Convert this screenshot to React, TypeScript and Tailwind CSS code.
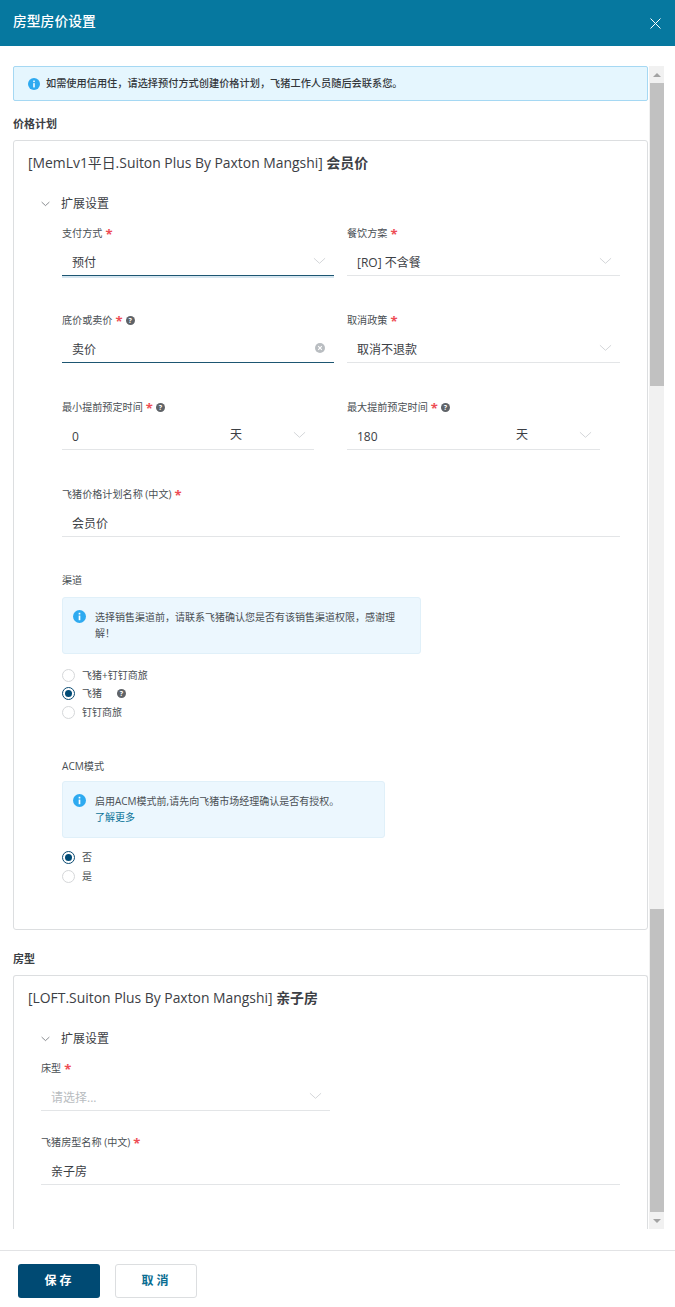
import type { ReactNode } from 'react'

const FONT = "font-['Open_Sans','Noto_Sans_CJK_SC',sans-serif]"

function Chevron({ className = 'text-[#d0d3d6]' }: { className?: string }) {
  return (
    <svg width="13" height="8" viewBox="0 0 14 8" fill="none" className={className}>
      <path d="M1 1l6 5.5L13 1" stroke="currentColor" strokeWidth="1" />
    </svg>
  )
}

function InfoIcon({ size = 13 }: { size?: number }) {
  return (
    <svg width={size} height={size} viewBox="0 0 14 14" className="shrink-0">
      <circle cx="7" cy="7" r="7" fill="#2eaaf0" />
      <rect x="6.1" y="6" width="1.8" height="5" fill="#fff" />
      <rect x="6.1" y="3" width="1.8" height="1.8" fill="#fff" />
    </svg>
  )
}

function HelpIcon() {
  return (
    <span className="w-[9px] h-[9px] rounded-full bg-[#5f6368] text-white text-[7px] leading-[9px] font-bold text-center inline-block shrink-0">
      ?
    </span>
  )
}

function ClearIcon() {
  return (
    <svg width="10" height="10" viewBox="0 0 10 10">
      <circle cx="5" cy="5" r="5" fill="#b9bdc1" />
      <path d="M3.2 3.2l3.6 3.6M6.8 3.2L3.2 6.8" stroke="#fff" strokeWidth="1.1" />
    </svg>
  )
}

function Label({ text, required, help }: { text: string; required?: boolean; help?: boolean }) {
  return (
    <div className="h-4 flex items-center gap-[3px] text-[10.1px] leading-4 text-[#4a4f54]">
      <span>{text}</span>
      {required && <span className="text-[13px] leading-4 font-bold text-[#ee4d55] mt-[2px]">*</span>}
      {help && <HelpIcon />}
    </div>
  )
}

interface FieldProps {
  label: string
  value: string
  required?: boolean
  help?: boolean
  focused?: boolean
  glow?: boolean
  placeholder?: boolean
  unit?: string
  trailing?: ReactNode
  className?: string
}

function Field({ label, value, required = true, help, focused, glow, placeholder, unit, trailing, className = '' }: FieldProps) {
  const line = focused ? 'border-[#1d5672]' : 'border-[#e3e5e7]'
  return (
    <div className={className}>
      <Label text={label} required={required} help={help} />
      <div className={`h-[35px] pl-[10px] border-b ${line} flex items-center text-[12px] ${placeholder ? 'text-[#b8bcc0]' : 'text-[#3c4045]'} ${glow ? 'shadow-[0_2px_0_#d6e6f0]' : ''}`}>
        <span className="flex-1 mt-[9px]">{value}</span>
        {unit && <span className="mt-[6px] mr-[51px] text-[#3c4045]">{unit}</span>}
        <span className="mr-[8px] mt-[5px] flex items-center">{trailing ?? <Chevron />}</span>
      </div>
    </div>
  )
}

function Radio({ label, checked, help }: { label: string; checked?: boolean; help?: boolean }) {
  return (
    <div className="h-[18.5px] flex items-center text-[10px] text-[#4a4f54]">
      <span className={`w-[13px] h-[13px] rounded-full bg-white flex items-center justify-center mr-[7px] border ${checked ? 'border-[#0a4a72]' : 'border-[#d5d7d9]'}`}>
        {checked && <span className="w-[7px] h-[7px] rounded-full bg-[#004b76]" />}
      </span>
      <span>{label}</span>
      {help && <span className="ml-[15px] flex"><HelpIcon /></span>}
    </div>
  )
}

function Expand() {
  return (
    <div className="h-4 flex items-center gap-[11px] pl-[27px] text-[12px] text-[#3c4045]">
      <Chevron className="text-[#4a4f54] w-[9px] h-[6px]" />
      <span>扩展设置</span>
    </div>
  )
}

function Notice({ children, className }: { children: ReactNode; className: string }) {
  return (
    <div className={`${className} ml-[48px] rounded-[3px] border border-[#e0f0f9] bg-[#ecf7fe] pl-[10px] pr-3 pt-[11px] flex gap-[9px] text-[10px] leading-[16px] text-[#4a4f54]`}>
      <span className="mt-[1px]"><InfoIcon /></span>
      <div>{children}</div>
    </div>
  )
}

export default function App() {
  return (
    <div className={`${FONT} w-[675px] h-[1307px] bg-white flex flex-col overflow-hidden`}>
      {/* Header */}
      <div className="h-[46px] bg-[#06789f] flex items-center justify-between pl-[13px] pr-[14px] text-white">
        <span className="text-[13.8px] font-medium mb-[3px]">房型房价设置</span>
        <svg width="11" height="11" viewBox="0 0 11 11" fill="none">
          <path d="M.5.5l10 10M10.5.5l-10 10" stroke="#fff" strokeWidth="1" />
        </svg>
      </div>

      {/* Body */}
      <div className="h-[1183px] pt-5 pl-[13px] flex overflow-hidden">
        <div className="w-[635px] shrink-0 flex flex-col">
          <div className="h-[35px] shrink-0 rounded-[2px] border border-[#a5d8f3] bg-[#e5f6fe] flex items-center gap-[6px] pl-[14px] text-[10.2px] font-medium text-[#33373b]">
            <InfoIcon size={12} />
            <span>如需使用信用住，请选择预付方式创建价格计划，飞猪工作人员随后会联系您。</span>
          </div>

          <div className="h-[39px] shrink-0 flex items-end pb-[8px] text-[11px] font-semibold text-[#3c4045]">价格计划</div>

          <div className="h-[790px] shrink-0 rounded-[3px] border border-[#dcdee0] bg-white">
            <div className="h-[46px] pl-[14px] pt-[12px] text-[13.9px] leading-5 text-[#3c4045]">
              [MemLv1平日.Suiton Plus By Paxton Mangshi] <span className="font-semibold">会员价</span>
            </div>
            <div className="mt-[9px]"><Expand /></div>
            <div className="mt-[13px] ml-[48px] mr-[27px] grid grid-cols-[272px_273px] gap-x-[13px] gap-y-[36px]">
              <Field label="支付方式" value="预付" focused glow />
              <Field label="餐饮方案" value="[RO] 不含餐" />
              <Field label="底价或卖价" value="卖价" help focused trailing={<span className="mr-[1px]"><ClearIcon /></span>} />
              <Field label="取消政策" value="取消不退款" />
              <Field label="最小提前预定时间" value="0" help unit="天" className="w-[252px]" />
              <Field label="最大提前预定时间" value="180" help unit="天" className="w-[253px]" />
              <Field label="飞猪价格计划名称 (中文)" value="会员价" trailing={<span />} className="col-span-2" />
            </div>

            <div className="mt-[35px] ml-[48px]"><Label text="渠道" /></div>
            <div className="mt-[9px]">
              <Notice className="w-[359px] h-[57px]">选择销售渠道前，请联系飞猪确认您是否有该销售渠道权限，感谢理解！</Notice>
            </div>
            <div className="mt-[12px] ml-[48px]">
              <Radio label="飞猪+钉钉商旅" />
              <Radio label="飞猪" checked help />
              <Radio label="钉钉商旅" />
            </div>

            <div className="mt-[36px] ml-[48px]"><Label text="ACM模式" /></div>
            <div className="mt-[7px]">
              <Notice className="w-[323px] h-[57px]">
                启用ACM模式前,请先向飞猪市场经理确认是否有授权。
                <div className="text-[#0b7398]">了解更多</div>
              </Notice>
            </div>
            <div className="mt-[11px] ml-[48px]">
              <Radio label="否" checked />
              <Radio label="是" />
            </div>
          </div>

          <div className="h-[45px] shrink-0 flex items-end pb-[8px] text-[11px] font-semibold text-[#3c4045]">房型</div>

          <div className="flex-1 rounded-t-[3px] border border-b-0 border-[#dcdee0] bg-white">
            <div className="h-[46px] pl-[14px] pt-[12px] text-[13.9px] leading-5 text-[#3c4045]">
              [LOFT.Suiton Plus By Paxton Mangshi] <span className="font-semibold">亲子房</span>
            </div>
            <div className="mt-[9px]"><Expand /></div>
            <div className="mt-[13px] ml-[27px] mr-[27px] flex flex-col gap-[23px]">
              <Field label="床型" value="请选择..." placeholder className="w-[289px]" />
              <Field label="飞猪房型名称 (中文)" value="亲子房" trailing={<span />} />
            </div>
          </div>
        </div>

        {/* Scrollbar */}
        <div className="w-[15px] ml-px shrink-0 bg-[#f1f1f1] flex flex-col items-center">
          <div className="h-[17px] shrink-0 flex items-center justify-center">
            <span className="border-x-[4px] border-x-transparent border-b-[4px] border-b-[#a3a3a3]" />
          </div>
          <div className="h-[303px] w-[14px] shrink-0 bg-[#c1c1c1]" />
          <div className="h-[523px] shrink-0" />
          <div className="h-[303px] w-[14px] shrink-0 bg-[#c1c1c1]" />
          <div className="h-[17px] shrink-0 flex items-center justify-center">
            <span className="border-x-[4px] border-x-transparent border-t-[4px] border-t-[#a3a3a3]" />
          </div>
        </div>
      </div>

      {/* Footer */}
      <div className="mt-[21px] flex-1 border-t border-[#e2e3e5] pt-[13px] pl-[18px] flex items-start gap-[15px]">
        <button className="w-[82px] h-[34px] pl-px rounded-[3px] bg-[#004a73] text-white text-[12px] font-bold tracking-[3px]">保存</button>
        <button className="w-[82px] h-[34px] pl-px rounded-[3px] border border-[#dcdee0] bg-white text-[#0b6e92] text-[12px] font-bold tracking-[3px]">取消</button>
      </div>
    </div>
  )
}
